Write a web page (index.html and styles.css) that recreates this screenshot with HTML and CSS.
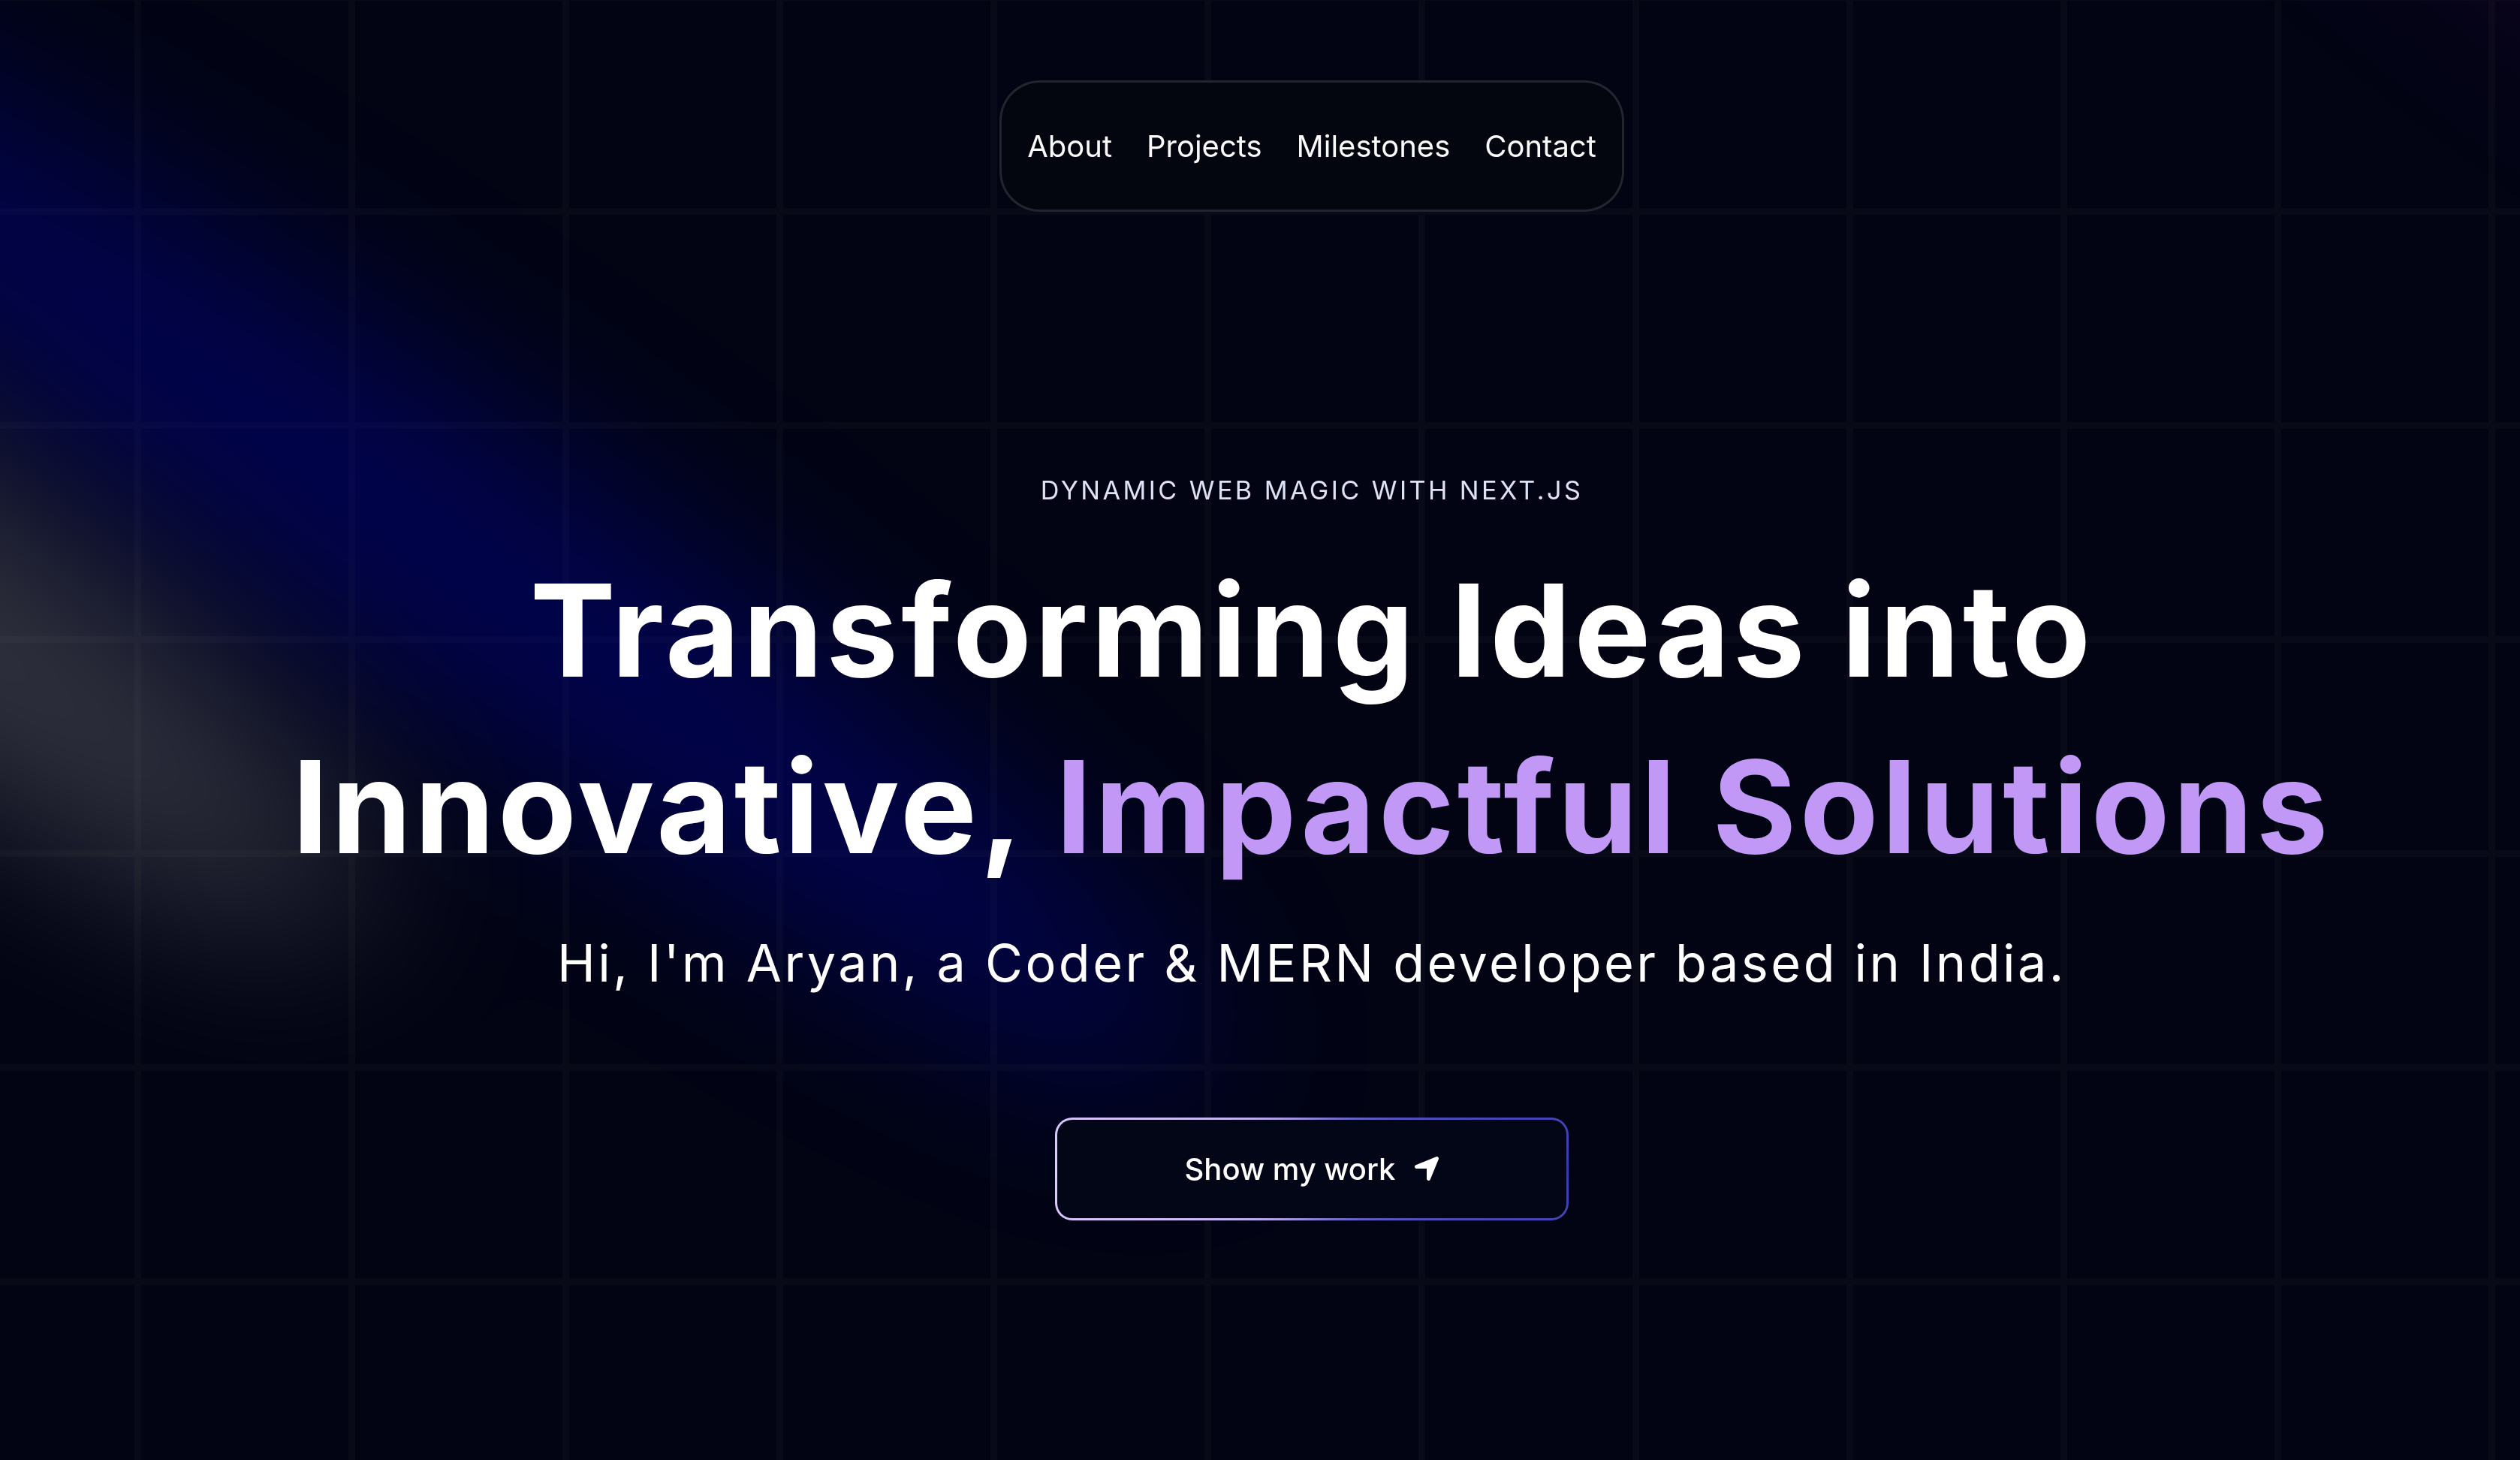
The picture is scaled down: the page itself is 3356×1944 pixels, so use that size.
FILE: index.html
```html
<!DOCTYPE html>
<html lang="en">
<head>
<meta charset="utf-8">
<title>Aryan — Portfolio</title>
<link rel="stylesheet" href="styles.css">
</head>
<body>
<main class="page">
  <svg class="spotlights" width="3356" height="1944" viewBox="0 0 3356 1944" aria-hidden="true">
    <defs>
      <filter id="soft" filterUnits="userSpaceOnUse" x="-1500" y="-1500" width="6400" height="5000" color-interpolation-filters="sRGB">
        <feGaussianBlur stdDeviation="115"/>
      </filter>
    </defs>
    <g filter="url(#soft)">
      <ellipse cx="0" cy="0" rx="820" ry="175" transform="translate(-190 750) rotate(34.7)" fill="#ffffff" fill-opacity="0.19"/>
      <ellipse cx="0" cy="0" rx="1250" ry="180" transform="translate(580 720) rotate(34.7)" fill="#0000ff" fill-opacity="0.25"/>
      <ellipse cx="0" cy="0" rx="900" ry="150" transform="translate(3650 0) rotate(34.7)" fill="#800080" fill-opacity="0.16"/>
    </g>
  </svg>

  <nav class="nav">
    <a class="nav-link" href="#about">About</a>
    <a class="nav-link" href="#projects">Projects</a>
    <a class="nav-link" href="#milestones">Milestones</a>
    <a class="nav-link" href="#contact">Contact</a>
  </nav>

  <section class="hero">
    <p class="eyebrow">Dynamic Web Magic with Next.js</p>
    <h1 class="headline">Transforming Ideas into Innovative, <span class="accent">Impactful Solutions</span></h1>
    <p class="intro">Hi, I'm Aryan, a Coder &amp; MERN developer based in India.</p>
    <a class="cta" href="#projects">
      <span class="cta-inner">Show my work
        <svg class="cta-icon" viewBox="16 48 416 416" aria-hidden="true"><path d="M429.6 92.1c4.9-11.9 2.1-25.6-7-34.7s-22.8-11.9-34.7-7l-352 144c-14.2 5.8-22.2 20.8-19.3 35.8s16.1 25.8 31.4 25.8H224V432c0 15.3 10.8 28.4 25.8 31.4s30-5.1 35.8-19.3l144-352z" fill="currentColor"/></svg>
      </span>
    </a>
  </section>
</main>
</body>
</html>
```

FILE: styles.css
```css
* {
  box-sizing: border-box;
}

html, body {
  margin: 0;
  padding: 0;
  background: #020414;
}

body {
  font-family: "Inter", "Noto Sans", "Liberation Sans", sans-serif;
  color: #ffffff;
}

.page {
  position: relative;
  width: 3356px;
  height: 1944px;
  overflow: hidden;
  display: flex;
  flex-direction: column;
  align-items: center;
  padding: 107px 0 0 138px;
  background-color: #020414;
  background-image:
    linear-gradient(to right, transparent 276px, #080a18 276px),
    linear-gradient(to bottom, #080a18 9px, transparent 9px);
  background-size: 285px 285px;
  background-position: 188px 277px;
}

.spotlights {
  position: absolute;
  left: 0;
  top: 0;
  pointer-events: none;
}

.nav {
  position: relative;
  z-index: 2;
  display: flex;
  align-items: center;
  gap: 46px;
  height: 175px;
  padding: 0 34px;
  border: 3px solid rgba(255, 255, 255, 0.13);
  border-radius: 54px;
  background: #03050f;
}

.nav-link {
  color: #fafafa;
  text-decoration: none;
  font-size: 40px;
  line-height: 57px;
}

.hero {
  position: relative;
  z-index: 2;
  margin-top: 348px;
  display: flex;
  flex-direction: column;
  align-items: center;
  max-width: 2800px;
}

.eyebrow {
  margin: 0;
  font-size: 34.2px;
  line-height: 45.6px;
  letter-spacing: 0.1em;
  text-transform: uppercase;
  color: #dde2f4;
  text-align: center;
}

.headline {
  margin: 45.6px 0;
  font-size: 171px;
  line-height: 235.1px;
  font-weight: 700;
  letter-spacing: 0.025em;
  text-align: center;
  color: #ffffff;
}

.accent {
  color: #c198f5;
}

.intro {
  margin: 0 0 45.6px;
  font-size: 68.4px;
  line-height: 91.2px;
  letter-spacing: 0.05em;
  text-align: center;
  color: #ffffff;
}

.cta {
  display: block;
  margin-top: 114px;
  width: 684px;
  height: 137px;
  padding: 3px;
  border-radius: 23px;
  background: conic-gradient(from 270deg at 50% 50%, #e2cbff 0%, #393bb2 50%, #e2cbff 100%);
  text-decoration: none;
}

.cta-inner {
  display: flex;
  align-items: center;
  justify-content: center;
  gap: 26px;
  width: 100%;
  height: 100%;
  border-radius: 20px;
  background: #020617;
  color: #ffffff;
  font-size: 40px;
  font-weight: 500;
}

.cta-icon {
  width: 32px;
  height: 32px;
}
```
